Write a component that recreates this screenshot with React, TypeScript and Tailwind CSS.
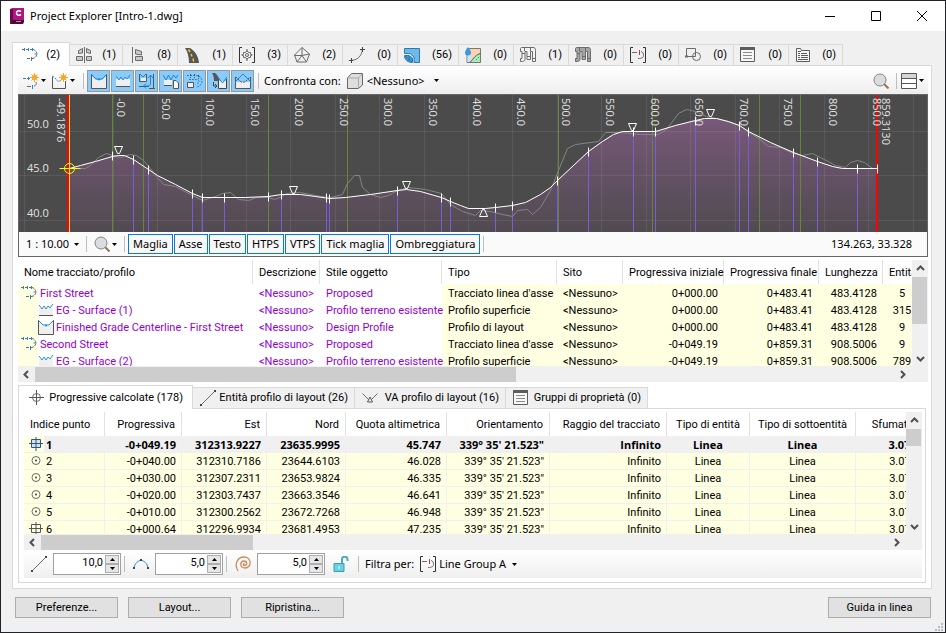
import { ReactNode, useState } from "react";

const BLUE = "#1f86d0";
const GRAY = "#6b6b6b";

/* ---------- Icons ---------- */

function Icon({ children, size = 16, className = "" }: { children: ReactNode; size?: number; className?: string }) {
  return (
    <svg width={size} height={size} viewBox="0 0 16 16" fill="none" aria-hidden="true" className={`shrink-0 ${className}`}>
      {children}
    </svg>
  );
}

function Caret({ className = "" }: { className?: string }) {
  return (
    <svg width="5" height="3" viewBox="0 0 5 3" aria-hidden="true" className={`shrink-0 ${className}`}>
      <path d="M0 0h5L2.500 3z" fill="#000" />
    </svg>
  );
}

const AlignmentIcon = () => (
  <Icon>
    <path d="M0 2.500h3M4 2.500h1M8 2.500h2" stroke={GRAY} />
    <path d="M5 2.500h2M6.500 1v3M2.500 1v3M10.500 1v3M9.500 10v4" stroke={BLUE} />
    <path d="M11 2.500c5 1 5 8 0 9" stroke={GRAY} strokeDasharray="2.500 1" />
    <path d="M5 11.500h3M10 11.500h1" stroke={GRAY} />
    <path d="M12.500 7h3" stroke={BLUE} />
  </Icon>
);

const AssemblyIcon = () => (
  <Icon>
    <path d="M8.500 0v16" stroke={GRAY} />
    <path d="M2.500 6.500v-3l4-2V6zM.5 9.500h6v4h-6z" stroke={GRAY} fill="#c9c9c9" />
    <path d="m10.500 1.500 4 2v3l-4-1zM10.500 9.500h5v4h-5z" stroke={GRAY} fill="#c9c9c9" />
  </Icon>
);

const SubassemblyIcon = () => (
  <Icon>
    <path d="M3.500 0v16" stroke={GRAY} />
    <path d="m6.500 2.500 6 2V8l-6-1zM6.500 9.500h7v4h-7z" stroke={GRAY} fill="#c9c9c9" />
  </Icon>
);

const RoadIcon = () => (
  <Icon>
    <path d="M1 1h5c5 3 8.500 8 9 15H5C5 11 4 5 1 1z" fill="#575757" />
    <path d="M4.500 2.500 6 5M7 7l1 2.500M9 11.500l.6 3" stroke="#f5c52c" strokeWidth="1.500" />
  </Icon>
);

const GroupPointIcon = () => (
  <Icon>
    <path d="M3 .5H.5v15H3M13 .5h2.500v15H13" stroke="#333" />
    <path d="M8 2v3M8 11v3M2.500 8h2.500M11 8h2.500" stroke={GRAY} />
    <path d="M8 3.500 9.500 5.500h2V7L13 8l-1.500 1v1.500h-2L8 12.500 6.500 10.500h-2V9L3 8l1.500-1V5.500h2z" stroke={GRAY} />
    <circle cx="8" cy="8" r="1.500" stroke={GRAY} />
  </Icon>
);

const SurfaceIcon = () => (
  <Icon>
    <path d="M8 .5 15.500 7l-3 8H3L.5 8zM8 .5v8M.5 8.500l7.500 0 7.500-1.500M3 15l5-6.500 4.500 6.500" stroke={GRAY} />
  </Icon>
);

const FeatureLineIcon = () => (
  <Icon>
    <path d="M1 13.500c7 0 12-4 12.500-12" stroke={GRAY} />
    <path d="M0 13.500h4M2.500 11v5M11 2.500h5M13.500 0v5" stroke="#444" />
  </Icon>
);

const ParcelIcon = () => (
  <Icon>
    <path d="M.5 1.500h15v14h-5.500V10L6 6.500H.5z" fill="#6db9ea" stroke="#2a7ab5" />
    <path d="M.5 8.500H5L8.500 11v4.500C4 15.500.5 13 .5 8.500z" fill="#3f9bd8" stroke="#2a7ab5" />
    <path d="m1 9 7 6M5 9v5" stroke="#2a7ab5" />
  </Icon>
);

const CatchmentIcon = () => (
  <Icon>
    <path d="M2 1.500h13.500v14H2z" fill="#fbd2b2" stroke="#777" />
    <path d="M2.500 8.500C6 8 8 9 8 15H2.500z" fill="#c6e3f7" />
    <path d="M15 6.500c-4 1-5 4-9 8.500h9z" fill="#a4efb8" />
    <path d="M15.500 6.500C11 7.500 9 11 5 15.500" stroke="#555" />
    <path d="M3 0c2 3 3 4 3 5.500a3 3 0 0 1-6 0C0 4 1 3 3 0z" fill="#3c9ad9" />
    <path d="M11 12.500h1M13 10.500h1" stroke="#379a52" />
  </Icon>
);

const PipesIcon = ({ fill = "#f4f4f4" }: { fill?: string }) => (
  <Icon>
    <path d="M.5 1.500c0-1 1-1 1-1H13c2 0 2.500 1 2.500 3v11h-3v-10h-2v8H7v-8H5v8c0 1.500-1.500 2-4.500 2v-3h1.500v-7H.5z" fill={fill} stroke={GRAY} />
    <path d="M4.500 1v3M10.500 1v3M2 6.500h3M7 9.500h3.500M12.500 11.500h3" stroke={GRAY} />
  </Icon>
);

const LineGroupIcon = () => (
  <Icon>
    <path d="M3 .5H.5v15H3M13 .5h2.500v15H13" stroke="#333" />
    <path d="M2 5.500h5M11 4.500c2 .5 2.500 2 2.500 4s-1.500 3-5.500 3" stroke={GRAY} />
    <path d="M9.500 3v5" stroke="#d83030" />
  </Icon>
);

const ShapesIcon = () => (
  <Icon>
    <path d="M1.500 1.500h9v8h-9z" stroke={GRAY} />
    <circle cx="11.500" cy="9.500" r="4" stroke={GRAY} />
    <path d="M0 9.500h3" stroke={GRAY} strokeWidth="2" />
  </Icon>
);

const PropertySetIcon = () => (
  <Icon>
    <path d="M.5 1.500h14v13h-14z" fill="#f7f7f7" stroke="#5c5c5c" />
    <path d="M0 0h15v3H0z" fill="#5c5c5c" />
    <path d="M3 5.500h9M3 8.500h9M3 11.500h9" stroke="#8a8a8a" />
  </Icon>
);

const DocumentsIcon = () => (
  <Icon>
    <path d="M1.500 14.500v-13h4l1 2h8v11z" fill="#f7f7f7" stroke="#5c5c5c" />
    <path d="M3 4.500h3M3 6.500h2M6 6.500h6M3 8.500h2M6 8.500h7M3 10.500h2M6 10.500h7M3 12.500h10" stroke="#5c5c5c" />
  </Icon>
);

const Star = () => (
  <g>
    <path d="M11.500 0v9M7 4.500h9M8.500 1.500l6 6M14.500 1.500l-6 6" stroke="#f7a723" />
    <circle cx="11.500" cy="4.500" r="2.500" fill="#f7a723" />
  </g>
);

const NewAlignmentIcon = () => (
  <Icon>
    <path d="M0 5.500h3M13 9c1 2-.5 4-2 4M4 13.500h4" stroke={GRAY} />
    <path d="M4 5.500h3M5.500 4v3M9.500 12v4" stroke={BLUE} />
    <Star />
  </Icon>
);

const NewProfileIcon = () => (
  <Icon>
    <path d="M.5 4v11.500h13V8" stroke="#555" />
    <path d="m0 3 2 1M3 5l3 3.500 3-1" stroke={BLUE} strokeDasharray="2 1" />
    <Star />
  </Icon>
);

const LayoutProfileIcon = () => (
  <Icon>
    <path d="M.5 3v12.500h15V3L11 7H5z" fill="#efefef" />
    <path d="M.5 2v13.500h15V2" stroke="#555" />
    <path d="m0 1 5 5h6l5-5" stroke={BLUE} />
    <circle cx="8" cy="6.500" r="1" fill={BLUE} />
  </Icon>
);

const SurfaceProfileIcon = () => (
  <Icon>
    <path d="M1 6h14v7H1z" fill="#efefef" />
    <path d="m1 3 3 4 2-3 2 3 2-3 2 2 3-4" stroke="#2f90d4" />
    <path d="M1 13.500h14" stroke="#555" />
  </Icon>
);

const SuperimposedIcon = () => (
  <Icon>
    <path d="M.5 1v7.500h7V1M0 13.500h10M14.500 1v14M10 15.500h6" stroke="#555" />
    <path d="m1 1 3 3 3-3M9 5l2.500-3L14 5M11.500 2v8c0 2-1 3-3 3H5M7 10.500 4.500 13 7 15.500" stroke={BLUE} />
    <path d="M2 5h5v3H2z" fill="#efefef" />
  </Icon>
);

const ProfileFileIcon = () => (
  <Icon>
    <path d="M1 7h8v5H1z" fill="#efefef" />
    <path d="M1 12.500h8" stroke="#555" />
    <path d="m0 2 3 5 2.500-5L8 7l2.500-5L13 5l2-3" stroke={BLUE} />
    <path d="M10.500 7.500H13l2.500 2.500v5.500h-5z" fill="#fff" stroke="#555" />
  </Icon>
);

const OffsetIcon = () => (
  <Icon>
    <path d="M0 2.500h9c4 0 6 3 6 5.500s-2 6-6 6M2 6.500h6c3 0 4 .5 4 2s-1 2-3 2" stroke={BLUE} strokeDasharray="2 1" />
    <path d="M.5 9.500h6v5h-6z" fill="#efefef" stroke="#555" />
    <path d="M3.500 1v4M7.500 1v4M11.500 2v4" stroke="#555" strokeDasharray="2 1" />
  </Icon>
);

const CorridorProfileIcon = () => (
  <Icon>
    <path d="M1 0h3c3 2 4 5 4 8H3C3 5 2.500 2 1 0z" fill="#575757" />
    <path d="M7 8h8v7H7z" fill="#efefef" />
    <path d="M2.500 9v4H5M7.500 6v9.500h8V6" stroke="#444" />
    <path d="m7 4 4.500 6L16 4" stroke={BLUE} />
    <path d="m4 11 2 2-2 2" stroke="#444" />
  </Icon>
);

const VerticalPointIcon = () => (
  <Icon>
    <path d="M1 9h14v6H1z" fill="#efefef" />
    <path d="M.5 4v11.500h15V4" stroke="#555" />
    <path d="m0 9 5-5 3-3 3 3 5 5" stroke={BLUE} />
    <path d="m1 4 5 5h4l5-5" stroke="#555" strokeDasharray="2 1" />
  </Icon>
);

const CubeIcon = () => (
  <Icon>
    <path d="m.5 5 4-4.500h11V12l-4 3.500H.5z" fill="#dedede" stroke="#666" />
    <path d="M.5 5h11v10.500M11.500 5l4-4.500" stroke="#aaa" />
  </Icon>
);

const MagnifierIcon = () => (
  <Icon>
    <path d="m11 11 4.500 4.500" stroke="#8f7a55" strokeWidth="2" />
    <circle cx="7" cy="7" r="6" fill="#d9dddf" stroke="#858585" />
  </Icon>
);

const LayoutRowsIcon = () => (
  <Icon>
    <path d="M.5.5h15v15H.5z" fill="#fff" stroke="#555" />
    <path d="M1 1h14v4H1z" fill="#d5d5d5" />
    <path d="M0 5.500h16M0 10.500h16" stroke="#555" />
  </Icon>
);

const CrosshairIcon = () => (
  <Icon>
    <path d="M7.500 0v15M0 7.500h15" stroke="#555" />
    <circle cx="7.500" cy="7.500" r="4" stroke={GRAY} />
  </Icon>
);

const SegmentIcon = () => (
  <Icon>
    <path d="m1 15 14-14" stroke={GRAY} />
    <path d="M0 14h2v2H0zM14 0h2v2h-2z" fill="#444" />
  </Icon>
);

const ViIcon = () => (
  <Icon>
    <path d="m.5 3.500 6 6M15.500 3.500l-6 6" stroke={GRAY} />
    <path d="m8 7 2.500 5h-5z" stroke="#555" />
  </Icon>
);

const ArcIcon = () => (
  <Icon>
    <path d="M1 12C3 2 13 2 15 12" stroke={BLUE} />
    <path d="M0 11h2v2H0zM14 11h2v2h-2zM7 3h2v2H7z" fill="#444" />
  </Icon>
);

const SpiralIcon = () => (
  <Icon>
    <path d="M3 15C-1 9 2 1 9 1c8 0 8 11 1 11-5 0-6-7-1-7 3.500 0 3.500 4.500.5 4.500-1.500 0-1.500-2 0-2" stroke="#d08a5c" strokeWidth="1.300" />
  </Icon>
);

const UnlockIcon = () => (
  <Icon>
    <path d="M9 7V3c0-3 5.500-3 5.500 0v2" stroke="#4fa9b8" strokeWidth="2" />
    <path d="M1 7.500h10v8H1z" fill="#66d3e4" stroke="#3f9dad" />
    <path d="M6 10v3" stroke="#fff" />
  </Icon>
);

const KeyPointIcon = ({ selected = false }: { selected?: boolean }) => (
  <svg width="14" height="14" viewBox="0 0 14 14" fill="none" aria-hidden="true">
    <path d="M2.500 2.500h9v8h-9z" stroke={selected ? "#33566f" : "#555"} fill={selected ? "#cfe4f2" : "none"} />
    <path d="M7 0v14M0 6.500h14" stroke={selected ? "#33566f" : "#555"} />
  </svg>
);

const DotPointIcon = () => (
  <svg width="14" height="14" viewBox="0 0 14 14" fill="none" aria-hidden="true">
    <circle cx="7" cy="6.500" r="4" stroke={GRAY} />
    <circle cx="7" cy="6.500" r="1" fill="#444" />
  </svg>
);

const AppLogo = () => (
  <svg width="14" height="16" viewBox="0 0 14 16" aria-hidden="true">
    <path d="M0 1 3 0v14l-3 2z" fill="#6d0a4d" />
    <path d="M3 0h11v14H3z" fill="#b01681" />
    <path d="M0 16l3-4h11v2l-1 2z" fill="#4f0838" />
    <path d="M11 3.500C8.500 2 6.500 3 6.500 5S8.500 8 11 6.500" stroke="#fff" strokeWidth="1.500" fill="none" />
    <path d="M6 13.500h5" stroke="#b98ba9" />
  </svg>
);

/* ---------- Small shared pieces ---------- */

const Divider = () => <span className="block h-4 w-px shrink-0 bg-[#bdbdbd]" />;

function ScrollArrow({ dir, label }: { dir: "up" | "down" | "left" | "right"; label: string }) {
  const paths = {
    up: "M1 6 4.500 2.500 8 6",
    down: "M1 3l3.500 3.500L8 3",
    left: "M6 1 2.500 4.500 6 8",
    right: "M3 1l3.500 3.500L3 8",
  };
  return (
    <button type="button" aria-label={label} className="flex size-4 shrink-0 items-center justify-center">
      <svg width="9" height="9" viewBox="0 0 9 9" fill="none" aria-hidden="true">
        <path d={paths[dir]} stroke="#505050" strokeWidth="2" />
      </svg>
    </button>
  );
}

function VScroll({ thumb }: { thumb: string }) {
  return (
    <div className="flex w-4 shrink-0 flex-col bg-[#f0f0f0]">
      <ScrollArrow dir="up" label="Su" />
      <div className="flex-1 pt-px">
        <div className={`w-[15px] bg-[#cdcdcd] ${thumb}`} />
      </div>
      <ScrollArrow dir="down" label="Giù" />
    </div>
  );
}

function HScroll({ thumb }: { thumb: string }) {
  return (
    <div className="flex h-4 items-center bg-[#f0f0f0] pr-[18px]">
      <ScrollArrow dir="left" label="Sinistra" />
      <div className="min-w-0 flex-1 pl-px">
        <div className={`h-[15px] bg-[#cdcdcd] ${thumb}`} />
      </div>
      <ScrollArrow dir="right" label="Destra" />
    </div>
  );
}

/* ---------- Profile chart ---------- */

const gridX = [24, 68, 113, 157, 201, 246, 290, 335, 379, 424, 468, 512, 557, 601, 646, 690, 735, 779, 824, 868, 913];
const gridY = [131, 175, 220];
const greenX = [112, 143, 268, 347, 558, 652, 759, 800];

// x, y of every vertical geometry point on the finished grade
const points = [
  [133, 159], [148, 169], [192, 193], [202, 197], [224, 197], [281, 194], [326, 197], [329, 198],
  [397, 190], [441, 197], [450, 201], [495, 207], [512, 205], [557, 180], [588, 151], [633, 131],
  [655, 131], [695, 120], [739, 125], [748, 131], [793, 152], [817, 161], [857, 168],
];

const extraTicks = [[112, 155], [268, 196], [877, 168]];

const finishedGrade =
  "69,168 80,165 95,161 112,156 118,155 124,155 133,159 148,169 157,175 175,184 192,193 202,197 224,197 245,197 268,196 281,194 300,194 315,196 329,198 345,197 370,194 397,190 406,189 420,191 441,197 450,201 460,205 468,208 485,208 495,207 512,205 525,202 540,194 550,187 557,180 588,151 602,141 613,134 622,131 655,131 675,125 695,120 704,118 716,118 728,121 739,125 748,131 770,142 793,152 817,161 832,166 842,168 877,168";

const existingGround =
  "69,168 85,168 90,165 98,157 106,153 112,155 120,157 130,154 136,155 143,160 150,168 157,177 163,184 175,186 190,194 202,200 215,196 222,193 230,192 238,199 248,200 256,197 268,197 274,199 280,197 286,193 300,192 320,196 330,197 342,194 347,183 354,175 359,175 362,187 370,194 380,197 388,195 397,190 408,187 425,189 441,193 450,204 462,211 475,215 480,210 490,211 502,214 512,216 517,210 527,209 532,214 540,207 550,190 558,170 567,148 575,144 598,141 605,132 620,132 640,134 658,134 666,129 678,113 686,109 695,111 706,116 716,118 739,125 758,138 768,146 780,147 793,153 802,155 812,153 820,157 835,165 845,167 850,162 857,160 864,162 872,168";

const stations: [number, string][] = [
  [57, "-49.1876"], [117, "-0.0"], [162, "50.0"], [206, "100.0"], [251, "150.0"], [295, "200.0"], [340, "250.0"],
  [384, "300.0"], [429, "350.0"], [473, "400.0"], [517, "450.0"], [562, "500.0"], [606, "550.0"], [651, "600.0"],
  [695, "650.0"], [740, "700.0"], [784, "750.0"], [829, "800.0"], [873, "850.0"], [882, "859.3130"],
];

function ProfileChart() {
  return (
    <svg viewBox="19 95 908 137" preserveAspectRatio="xMinYMin slice" className="block h-[137px] w-full bg-[#4b4b4b]">
      <defs>
        <linearGradient id="shade" gradientUnits="userSpaceOnUse" x1="0" y1="117" x2="0" y2="232">
          <stop offset="0" stopColor="#785879" />
          <stop offset="1" stopColor="#504b50" />
        </linearGradient>
      </defs>
      <polygon points={`69,232 ${finishedGrade} 877,232`} fill="url(#shade)" />
      <g shapeRendering="crispEdges" strokeWidth="1" fill="none">
        {gridX.map((x) => (
          <path key={x} d={`M${x + 0.5} 95v137`} stroke="#fff" strokeOpacity="0.08" />
        ))}
        {gridY.map((y) => (
          <path key={y} d={`M19 ${y + 0.5}h908`} stroke="#fff" strokeOpacity="0.08" />
        ))}
        {greenX.map((x) => (
          <path key={x} d={`M${x + 0.5} 95v137`} stroke="#66853a" />
        ))}
        {points.map(([x, y]) => (
          <path key={x} d={`M${x + 0.5} ${y}V232`} stroke="#795cd8" />
        ))}
      </g>
      <path d="M68 95v137M877 95v137" stroke="#f00" strokeWidth="2" shapeRendering="crispEdges" />
      <path d="M69.500 95v137" stroke="#ffe600" shapeRendering="crispEdges" />
      <g fill="#e2e2e2" className="font-['Open_Sans',sans-serif] text-[11px]">
        <text x="27" y="128">50.0</text>
        <text x="27" y="172">45.0</text>
        <text x="27" y="217">40.0</text>
        {stations.map(([x, label]) => (
          <text key={x} transform={`translate(${x} 98) rotate(90)`}>
            {label}
          </text>
        ))}
      </g>
      <g transform="translate(0.5 0.5)" fill="none">
        <polyline points={existingGround} stroke="#858585" />
        <polyline points={finishedGrade} stroke="#fff" />
        {[...points, ...extraTicks].map(([x, y]) => (
          <path key={x} d={`M${x} ${y - 4}v9`} stroke="#fff" />
        ))}
        {[[118, 146], [293, 186], [406, 181], [632, 123], [710, 109]].map(([x, y]) => (
          <path key={x} d={`M${x - 4} ${y}h8l-3 7h-2z`} stroke="#fff" />
        ))}
        <path d="M479 216h8l-3-7h-2z" stroke="#fff" />
        <path d="M59 168h21" stroke="#ff0" />
        <circle cx="69" cy="168" r="5" stroke="#ff0" />
      </g>
    </svg>
  );
}

/* ---------- Data ---------- */

const mainTabs = [
  { icon: <AlignmentIcon />, name: "Tracciati", count: 2, width: "w-[58px]" },
  { icon: <AssemblyIcon />, name: "Sezioni tipo", count: 1, width: "w-[53px]" },
  { icon: <SubassemblyIcon />, name: "Elementi", count: 8, width: "w-[55px]" },
  { icon: <RoadIcon />, name: "Modellatori", count: 1, width: "w-[55px]" },
  { icon: <GroupPointIcon />, name: "Gruppi punti", count: 3, width: "w-[55px]" },
  { icon: <SurfaceIcon />, name: "Superfici", count: 2, width: "w-[55px]" },
  { icon: <FeatureLineIcon />, name: "Linee", count: 0, width: "w-[55px]" },
  { icon: <ParcelIcon />, name: "Lotti", count: 56, width: "w-[61px]" },
  { icon: <CatchmentIcon />, name: "Bacini", count: 0, width: "w-[55px]" },
  { icon: <PipesIcon />, name: "Reti", count: 1, width: "w-[55px]" },
  { icon: <PipesIcon fill="#a5a5a5" />, name: "Reti in pressione", count: 0, width: "w-[55px]" },
  { icon: <LineGroupIcon />, name: "Gruppi linee", count: 0, width: "w-[55px]" },
  { icon: <ShapesIcon />, name: "Forme", count: 0, width: "w-[55px]" },
  { icon: <PropertySetIcon />, name: "Proprietà", count: 0, width: "w-[55px]" },
  { icon: <DocumentsIcon />, name: "Documenti", count: 0, width: "w-[54px]" },
];

const viewToggles = [
  { icon: <LayoutProfileIcon />, name: "Profili di layout" },
  { icon: <SurfaceProfileIcon />, name: "Profili superficie" },
  { icon: <SuperimposedIcon />, name: "Profili sovrapposti" },
  { icon: <ProfileFileIcon />, name: "Profili da file" },
  { icon: <OffsetIcon />, name: "Tracciati di offset" },
  { icon: <CorridorProfileIcon />, name: "Profili modellatore" },
  { icon: <VerticalPointIcon />, name: "Profili rapidi" },
];

const profileRows = [
  { level: 0, icon: <AlignmentIcon />, name: "First Street", style: "Proposed", type: "Tracciato linea d'asse", start: "0+000.00", end: "0+483.41", length: "483.4128", count: "5" },
  { level: 1, icon: <SurfaceProfileIcon />, name: "EG - Surface (1)", style: "Profilo terreno esistente", type: "Profilo superficie", start: "0+000.00", end: "0+483.41", length: "483.4128", count: "315" },
  { level: 1, icon: <LayoutProfileIcon />, name: "Finished Grade Centerline - First Street", style: "Design Profile", type: "Profilo di layout", start: "0+000.00", end: "0+483.41", length: "483.4128", count: "9" },
  { level: 0, icon: <AlignmentIcon />, name: "Second Street", style: "Proposed", type: "Tracciato linea d'asse", start: "-0+049.19", end: "0+859.31", length: "908.5006", count: "9" },
  { level: 1, icon: <SurfaceProfileIcon />, name: "EG - Surface (2)", style: "Profilo terreno esistente", type: "Profilo superficie", start: "-0+049.19", end: "0+859.31", length: "908.5006", count: "789" },
];

const stationRows = [
  ["1", "-0+049.19", "312313.9227", "23635.9995", "45.747"],
  ["2", "-0+040.00", "312310.7186", "23644.6103", "46.028"],
  ["3", "-0+030.00", "312307.2311", "23653.9824", "46.335"],
  ["4", "-0+020.00", "312303.7437", "23663.3546", "46.641"],
  ["5", "-0+010.00", "312300.2562", "23672.7268", "46.948"],
  ["6", "-0+000.64", "312296.9934", "23681.4953", "47.235"],
];

const detailTabs = [
  { icon: <CrosshairIcon />, label: "Progressive calcolate (178)", width: "w-[175px]" },
  { icon: <SegmentIcon />, label: "Entità profilo di layout (26)", width: "w-[162px]" },
  { icon: <ViIcon />, label: "VA profilo di layout (16)", width: "w-[151px]" },
  { icon: <PropertySetIcon />, label: "Gruppi di proprietà (0)", width: "w-[142px]" },
];

/* ---------- Sections ---------- */

function TitleBar() {
  return (
    <header className="flex h-[30px] items-center bg-white pl-[9px]">
      <AppLogo />
      <h1 className="ml-[6px] flex-1 font-['Noto_Sans',sans-serif] text-[11px]">Project Explorer [Intro-1.dwg]</h1>
      <button type="button" aria-label="Riduci a icona" className="flex h-7 w-[46px] items-center justify-center">
        <svg width="10" height="10" viewBox="0 0 10 10"><path d="M0 5.500h10" stroke="#000" /></svg>
      </button>
      <button type="button" aria-label="Ingrandisci" className="flex h-7 w-[46px] items-center justify-center">
        <svg width="10" height="10" viewBox="0 0 10 10" fill="none"><path d="M.5.5h9v9h-9z" stroke="#000" /></svg>
      </button>
      <button type="button" aria-label="Chiudi" className="flex h-7 w-[46px] items-center justify-center">
        <svg width="10" height="10" viewBox="0 0 10 10"><path d="m0 0 10 10M10 0 0 10" stroke="#000" /></svg>
      </button>
    </header>
  );
}

function MainTabs() {
  return (
    <div role="tablist" className="flex h-[23px] items-end">
      {mainTabs.map((tab, i) => (
        <button
          key={tab.name}
          type="button"
          role="tab"
          title={tab.name}
          aria-selected={i === 0}
          className={`flex shrink-0 items-center justify-between border-t border-r border-[#d9d9d9] ${tab.width} ${
            i === 0 ? "z-10 -mb-px h-6 border-l bg-white pr-[9px] pl-[9px]" : "h-[21px] bg-[#f0f0f0] pr-[6px] pl-[6px]"
          }`}
        >
          {tab.icon}
          <span>({tab.count})</span>
        </button>
      ))}
    </div>
  );
}

function Toolbar() {
  return (
    <div className="flex h-[27px] items-center bg-linear-to-b from-white to-[#eeeeee] font-['Noto_Sans',sans-serif]">
      <button type="button" aria-label="Nuovo tracciato" className="ml-[5px] flex w-[26px] items-center gap-0.5">
        <NewAlignmentIcon />
        <Caret />
      </button>
      <button type="button" aria-label="Nuovo profilo" className="ml-[3px] flex w-[26px] items-center gap-0.5">
        <NewProfileIcon />
        <Caret />
      </button>
      <div className="mr-[3px] ml-[5px]">
        <Divider />
      </div>
      <div className="flex gap-px">
        {viewToggles.map((t) => (
          <button
            key={t.name}
            type="button"
            aria-pressed="true"
            title={t.name}
            className="flex h-[22px] w-[23px] items-center justify-center border border-[#8d9aa5] bg-[#8bcbf9]"
          >
            {t.icon}
          </button>
        ))}
      </div>
      <div className="mr-[5px] ml-1">
        <Divider />
      </div>
      <label htmlFor="compare" className="whitespace-nowrap">
        Confronta con:
      </label>
      <div className="relative ml-[6px] flex items-center gap-1">
        <CubeIcon />
        <select id="compare" className="w-[72px] appearance-none bg-transparent">
          <option>&lt;Nessuno&gt;</option>
        </select>
        <Caret className="pointer-events-none absolute right-0" />
      </div>
      <button type="button" aria-label="Zoom" className="mr-[7px] ml-auto">
        <MagnifierIcon />
      </button>
      <Divider />
      <button type="button" aria-label="Disposizione" className="mr-1 ml-1 flex items-center gap-0.5">
        <LayoutRowsIcon />
        <Caret />
      </button>
    </div>
  );
}

function ChartPanel() {
  const options = ["Maglia", "Asse", "Testo", "HTPS", "VTPS", "Tick maglia", "Ombreggiatura"];
  return (
    <section className="border border-[#666]">
      <ProfileChart />
      <div className="flex h-6 items-center bg-[#fafafa] font-['Noto_Sans',sans-serif]">
        <div className="relative ml-[7px] flex items-center">
          <select aria-label="Scala verticale" className="w-[53px] appearance-none bg-transparent">
            <option>1 : 10.00</option>
          </select>
          <Caret className="pointer-events-none absolute right-0" />
        </div>
        <div className="mx-[7px]">
          <Divider />
        </div>
        <button type="button" aria-label="Zoom" className="flex items-center gap-0.5">
          <MagnifierIcon />
          <Caret />
        </button>
        <div className="mr-[3px] ml-[7px]">
          <Divider />
        </div>
        <div className="flex gap-px">
          {options.map((o) => (
            <button
              key={o}
              type="button"
              aria-pressed="true"
              className="h-5 border border-[#0a78d4] bg-[#f7f7f7] px-1 leading-4 whitespace-nowrap"
            >
              {o}
            </button>
          ))}
        </div>
        <div className="ml-[3px]">
          <Divider />
        </div>
        <output className="mr-[15px] ml-auto">134.263, 33.328</output>
      </div>
    </section>
  );
}

function ProfileTable() {
  const head = "border-r border-[#e2e2e2] px-[6px] pt-0.5 font-normal";
  const styled = "px-[6px] pt-0.5 text-[#9400d3]";
  const computed = "bg-[#ffffe1] px-[6px] pt-0.5";
  return (
    <section className="mt-[3px]">
      <div className="flex h-[106px]">
        <div className="min-w-0 flex-1 overflow-hidden">
          <table className="w-[903px] table-fixed border-separate border-spacing-0 leading-[14px] whitespace-nowrap">
            <colgroup>
              <col className="w-[235px]" />
              <col className="w-[67px]" />
              <col className="w-[122px]" />
              <col className="w-[115px]" />
              <col className="w-[66px]" />
              <col className="w-[101px]" />
              <col className="w-[95px]" />
              <col className="w-[64px]" />
              <col className="w-[38px]" />
            </colgroup>
            <thead>
              <tr className="h-6 text-left">
                <th className={head}>Nome tracciato/profilo</th>
                <th className={head}>Descrizione</th>
                <th className={head}>Stile oggetto</th>
                <th className={head}>Tipo</th>
                <th className={head}>Sito</th>
                <th className={`${head} text-right`}>Progressiva iniziale</th>
                <th className={`${head} text-right`}>Progressiva finale</th>
                <th className={`${head} text-right`}>Lunghezza</th>
                <th className="pt-0.5 pl-[6px] font-normal">Entità</th>
              </tr>
            </thead>
            <tbody>
              {profileRows.map((row) => (
                <tr key={row.name} className="h-[17px]">
                  <td className="p-0 text-[#9400d3]">
                    <div className="flex h-[17px] items-center">
                      <span className="flex h-[17px] w-5 shrink-0 items-center bg-[#ffffe1] pl-[3px]">
                        {row.level === 0 && row.icon}
                      </span>
                      {row.level === 1 && row.icon}
                      <span className="ml-0.5 pt-0.5">{row.name}</span>
                    </div>
                  </td>
                  <td className={styled}>&lt;Nessuno&gt;</td>
                  <td className={styled}>{row.style}</td>
                  <td className={computed}>{row.type}</td>
                  <td className={computed}>&lt;Nessuno&gt;</td>
                  <td className={`${computed} text-right`}>{row.start}</td>
                  <td className={`${computed} text-right`}>{row.end}</td>
                  <td className={`${computed} text-right`}>{row.length}</td>
                  <td className="bg-[#ffffe1] pt-0.5 text-center">{row.count}</td>
                </tr>
              ))}
            </tbody>
          </table>
        </div>
        <VScroll thumb="h-[47px]" />
      </div>
      <HScroll thumb="w-[56%]" />
    </section>
  );
}

function StationTable() {
  const head = "border-r border-[#e2e2e2] px-[6px] pt-0.5 font-normal";
  return (
    <div>
      <div className="flex h-[122px]">
        <div className="min-w-0 flex-1 overflow-hidden">
          <table className="w-[902px] table-fixed border-separate border-spacing-0 leading-[14px] whitespace-nowrap">
            <colgroup>
              <col className="w-[81px]" />
              <col className="w-[77px]" />
              <col className="w-[85px]" />
              <col className="w-[79px]" />
              <col className="w-[101px]" />
              <col className="w-[103px]" />
              <col className="w-[117px]" />
              <col className="w-[83px]" />
              <col className="w-[106px]" />
              <col className="w-[70px]" />
            </colgroup>
            <thead>
              <tr className="h-6 text-right">
                <th className={`${head} text-left`}>Indice punto</th>
                <th className={head}>Progressiva</th>
                <th className={head}>Est</th>
                <th className={head}>Nord</th>
                <th className={head}>Quota altimetrica</th>
                <th className={head}>Orientamento</th>
                <th className={head}>Raggio del tracciato</th>
                <th className={`${head} text-center`}>Tipo di entità</th>
                <th className={`${head} text-center`}>Tipo di sottoentità</th>
                <th className="px-[3px] pt-0.5 font-normal">Sfumatura</th>
              </tr>
            </thead>
            <tbody>
              {stationRows.map(([index, ...values], i) => {
                const selected = i === 0;
                const cell = "border-r border-b border-[#f0f0f0] px-[5px] pt-0.5";
                return (
                  <tr
                    key={index}
                    aria-selected={selected}
                    className={`h-[17px] text-right ${
                      selected ? "bg-[#f0f0f0] font-['Open_Sans',sans-serif] font-bold" : "bg-[#ffffe1]"
                    }`}
                  >
                    <td className="border-r border-b border-[#f0f0f0] p-0">
                      <div className="flex h-4 items-center">
                        <span className="flex h-4 w-5 items-center justify-end bg-[#ffffe1] pr-px">
                          {selected || i === 5 ? <KeyPointIcon selected={selected} /> : <DotPointIcon />}
                        </span>
                        <span className="ml-0.5 pt-0.5">{index}</span>
                      </div>
                    </td>
                    {values.map((v) => (
                      <td key={v} className={cell}>{v}</td>
                    ))}
                    <td className={cell}>339° 35' 21.523"</td>
                    <td className={cell}>Infinito</td>
                    <td className={`${cell} text-center`}>Linea</td>
                    <td className={`${cell} text-center`}>Linea</td>
                    <td className="border-b border-[#f0f0f0] px-[3px] pt-0.5">3.0700</td>
                  </tr>
                );
              })}
            </tbody>
          </table>
        </div>
        <VScroll thumb="h-[17px]" />
      </div>
      <HScroll thumb="w-[25%]" />
    </div>
  );
}

function Spinner({ label, initial }: { label: string; initial: number }) {
  const [value, setValue] = useState(initial);
  return (
    <div className="flex h-[22px] w-[68px] border border-[#a0a0a0] bg-white p-px">
      <input
        type="text"
        aria-label={label}
        value={value.toFixed(1).replace(".", ",")}
        readOnly
        className="w-0 flex-1 bg-transparent pr-0.5 pb-0.5 text-right outline-none"
      />
      <div className="flex w-[14px] flex-col">
        <button
          type="button"
          aria-label={`${label}: aumenta`}
          onClick={() => setValue(value + 1)}
          className="flex flex-1 items-center justify-center border border-[#adadad] bg-[#e6e6e6]"
        >
          <Caret className="rotate-180" />
        </button>
        <button
          type="button"
          aria-label={`${label}: diminuisci`}
          onClick={() => setValue(value - 1)}
          className="flex flex-1 items-center justify-center border border-[#adadad] bg-[#e6e6e6]"
        >
          <Caret />
        </button>
      </div>
    </div>
  );
}

function DetailPanel() {
  return (
    <section className="mt-[3px] mr-0.5">
      <div role="tablist" className="flex h-[23px] items-end">
        {detailTabs.map((tab, i) => (
          <button
            key={tab.label}
            type="button"
            role="tab"
            aria-selected={i === 0}
            className={`flex shrink-0 items-center justify-between border-t border-r border-[#d9d9d9] whitespace-nowrap ${tab.width} ${
              i === 0 ? "z-10 -mb-px h-6 border-l bg-white pr-[9px] pl-[10px]" : "h-[21px] bg-[#f0f0f0] pr-[6px] pl-[7px]"
            }`}
          >
            {tab.icon}
            <span>{tab.label}</span>
          </button>
        ))}
      </div>
      <div className="border border-[#d9d9d9] pt-[3px] pr-[3px] pb-1 pl-[5px]">
        <StationTable />
        <div className="flex h-7 items-center bg-linear-to-b from-white to-[#efefef] pl-[7px]">
          <SegmentIcon />
          <div className="mr-[3px] ml-[6px]">
            <Spinner label="Incremento linea" initial={10} />
          </div>
          <Divider />
          <div className="mr-[6px] ml-2">
            <ArcIcon />
          </div>
          <Spinner label="Incremento curva" initial={5} />
          <div className="mr-2 ml-[3px]">
            <Divider />
          </div>
          <SpiralIcon />
          <div className="mr-2 ml-[6px]">
            <Spinner label="Incremento spirale" initial={5} />
          </div>
          <button type="button" aria-label="Sblocca">
            <UnlockIcon />
          </button>
          <div className="mr-[6px] ml-[9px]">
            <Divider />
          </div>
          <label htmlFor="filter" className="font-['Noto_Sans',sans-serif] whitespace-nowrap">
            Filtra per:
          </label>
          <div className="relative ml-[6px] flex items-center gap-[3px]">
            <LineGroupIcon />
            <select id="filter" className="w-[78px] appearance-none bg-transparent font-['Noto_Sans',sans-serif]">
              <option>Line Group A</option>
            </select>
            <Caret className="pointer-events-none absolute right-0" />
          </div>
        </div>
      </div>
    </section>
  );
}

function DialogButton({ children }: { children: ReactNode }) {
  return (
    <button type="button" className="h-[21px] w-[103px] border border-[#adadad] bg-[#e1e1e1] leading-4">
      {children}
    </button>
  );
}

export default function App() {
  return (
    <div className="flex min-h-screen flex-col border border-[#22222a] bg-[#f0f0f0] font-[Roboto,sans-serif] text-[11px] leading-4 text-black">
      <TitleBar />
      <main className="pt-[11px] pr-[13px] pl-[11px]">
        <MainTabs />
        <div className="border border-[#d9d9d9] bg-white pt-px pr-[3px] pb-[5px] pl-[5px]">
          <Toolbar />
          <ChartPanel />
          <ProfileTable />
          <DetailPanel />
        </div>
      </main>
      <footer className="flex gap-[10px] pt-2 pr-[14px] pl-[14px]">
        <DialogButton>Preferenze...</DialogButton>
        <DialogButton>Layout...</DialogButton>
        <DialogButton>Ripristina...</DialogButton>
        <div className="ml-auto">
          <DialogButton>Guida in linea</DialogButton>
        </div>
      </footer>
      <svg width="9" height="9" viewBox="0 0 9 9" aria-hidden="true" className="mt-auto mr-px ml-auto">
        <path d="M6 0h2v2H6zM3 3h2v2H3zM6 3h2v2H6zM0 6h2v2H0zM3 6h2v2H3zM6 6h2v2H6z" fill="#bdbdbd" />
      </svg>
    </div>
  );
}
